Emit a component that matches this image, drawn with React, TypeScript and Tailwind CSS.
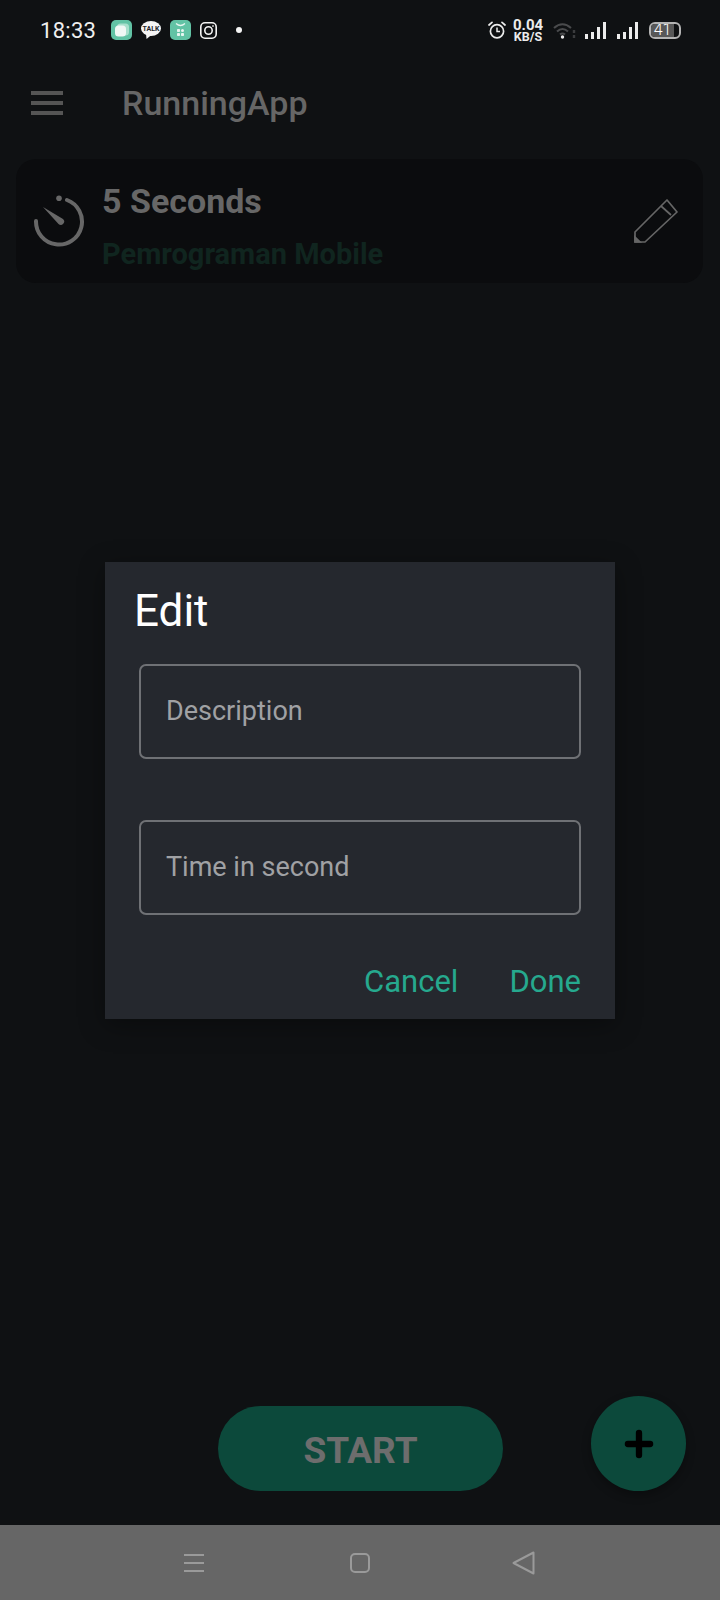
import { Plus } from "lucide-react";

function AppIcon() {
  return (
    <svg width="21" height="20" viewBox="0 0 21 20">
      <rect width="21" height="20" rx="5" fill="#62c3a5" />
      <rect x="6" y="3.5" width="12" height="12" rx="3.5" fill="#a9e0cd" />
      <rect x="4" y="5.5" width="11" height="11" rx="3.5" fill="#f1f8f5" />
    </svg>
  );
}

function TalkIcon() {
  return (
    <svg width="20" height="18" viewBox="0 0 20 18">
      <ellipse cx="10" cy="7.5" rx="10" ry="7.5" fill="#f4f4f4" />
      <path d="M5 12 L5.5 18 L11 13.5 Z" fill="#f4f4f4" />
      <text x="10" y="10" textAnchor="middle" fontSize="7" fontWeight="700" fill="#24262a" fontFamily="Roboto, sans-serif">TALK</text>
    </svg>
  );
}

function ShopIcon() {
  return (
    <svg width="21" height="20" viewBox="0 0 21 20">
      <rect width="21" height="20" rx="5" fill="#62c3a5" />
      <path d="M6 3.5 Q10.5 7.5 15 3.5" stroke="#e8f6f1" strokeWidth="1.2" fill="none" />
      <rect x="7" y="9" width="3" height="3" rx="0.7" fill="#e8f6f1" />
      <rect x="11" y="9" width="3" height="3" rx="1.5" fill="#e8f6f1" />
      <rect x="7" y="13" width="3" height="3" rx="0.7" fill="#e8f6f1" />
      <rect x="11" y="13" width="3" height="3" rx="0.7" fill="#e8f6f1" />
    </svg>
  );
}

function InstagramIcon() {
  return (
    <svg width="17" height="17" viewBox="0 0 17 17" fill="none" stroke="#f4f4f4" strokeWidth="1.6">
      <rect x="0.8" y="0.8" width="15.4" height="15.4" rx="4.2" />
      <circle cx="8.5" cy="8.5" r="3.7" />
      <circle cx="13" cy="4" r="0.6" fill="#f4f4f4" strokeWidth="0.6" />
    </svg>
  );
}

function AlarmIcon() {
  return (
    <svg width="18" height="18" viewBox="0 0 18 18" fill="none" stroke="#ececec" strokeWidth="1.7">
      <circle cx="9" cy="10.2" r="6.6" />
      <path d="M9 6.5 V10.5 H12" strokeWidth="1.5" />
      <path d="M1 4 L4 1.4 M17 4 L14 1.4" strokeLinecap="round" />
    </svg>
  );
}

function WifiIcon() {
  return (
    <svg width="23" height="17" viewBox="0 0 23 17" fill="none" stroke="#4a4b4d" strokeWidth="2.1">
      <path d="M1 6 Q9.5 -1.5 18 6" />
      <path d="M4 9.5 Q9.5 4.5 15 9.5" />
      <path d="M7 12.5 Q9.5 10.5 12 12.5" />
      <circle cx="9.5" cy="15" r="1.7" fill="#ececec" stroke="none" />
      <path d="M21 8 V11 M21 13 V16" stroke="#3b3c3e" strokeWidth="2.4" />
    </svg>
  );
}

function SignalIcon() {
  return (
    <div className="flex items-end gap-[3px] h-[17px] w-[22px]">
      <div className="w-[3px] h-[5px] bg-[#ececec]" />
      <div className="w-[3px] h-[7px] bg-[#ececec]" />
      <div className="w-[3px] h-[12px] bg-[#ececec]" />
      <div className="w-[3px] h-[17px] bg-[#ececec]" />
    </div>
  );
}

function Battery() {
  return (
    <div className="flex items-center w-[32px] h-[17px] rounded-[6px] border-2 border-[#b4b4b4] overflow-hidden">
      <div className="w-[23px] h-full bg-[#585858] flex items-center justify-center text-[16px] font-light leading-none text-white">41</div>
    </div>
  );
}

function TimerIcon() {
  return (
    <svg width="52" height="52" viewBox="0 0 52 52" fill="none">
      <path d="M34 5 A23 23 0 1 1 3 26" stroke="#676767" strokeWidth="4" strokeLinecap="round" />
      <circle cx="26" cy="3.2" r="2.8" fill="#676767" />
      <path d="M10 12 L30 24 A3.2 3.2 0 0 1 25.5 29 Z" fill="#676767" />
    </svg>
  );
}

function PencilIcon() {
  return (
    <svg width="44" height="44" viewBox="0 0 44 44" fill="none" stroke="#666" strokeWidth="1.7">
      <path d="M33 1 L43 13 L11 43 H1 V33 Z" strokeLinejoin="round" />
      <path d="M27 7 L37 16" />
      <path d="M1 38 L6 43 H1 Z" fill="#666" />
    </svg>
  );
}

function Field({ label }: { label: string }) {
  return (
    <div className="flex items-center h-[95px] px-[25px] rounded-[7px] border-2 border-[#6f7175] text-[27px] text-[#a0a1a4]">
      {label}
    </div>
  );
}

export default function App() {
  return (
    <div className="relative w-[720px] h-[1600px] flex flex-col overflow-hidden bg-[#0f1113] font-['Roboto',sans-serif]">
      <div className="flex items-center h-[60px] pl-[40px] pr-[39px] text-white">
        <span className="w-[71px] text-[22px] tracking-[0.3px] text-[#efefef]">18:33</span>
        <div className="flex items-center gap-[9px]">
          <AppIcon />
          <TalkIcon />
          <ShopIcon />
          <InstagramIcon />
          <div className="ml-[10px] w-[6px] h-[6px] rounded-full bg-[#f4f4f4]" />
        </div>
        <div className="ml-auto flex items-center">
          <AlarmIcon />
          <div className="ml-[7px] w-[30px] flex flex-col items-center font-bold text-[#ececec]">
            <span className="text-[15px] leading-[13px]">0.04</span>
            <span className="text-[12.5px] leading-[10px]">KB/S</span>
          </div>
          <div className="ml-[10px]"><WifiIcon /></div>
          <div className="ml-[9px]"><SignalIcon /></div>
          <div className="ml-[10px]"><SignalIcon /></div>
          <div className="ml-[10px]"><Battery /></div>
        </div>
      </div>

      <div className="flex items-center h-[86px] pl-[31px]">
        <div className="flex flex-col gap-[6px] w-[32px]">
          <div className="h-[4px] bg-[#555555]" />
          <div className="h-[4px] bg-[#555555]" />
          <div className="h-[4px] bg-[#555555]" />
        </div>
        <span className="ml-[59px] text-[34px] font-medium text-[#666666]">RunningApp</span>
      </div>

      <div className="mt-[13px] ml-[16px] mr-[17px] h-[124px] flex items-center pl-[17px] pr-[25px] rounded-[20px] bg-[#0b0c0e]">
        <TimerIcon />
        <div className="ml-[17px] self-start mt-[20px] flex flex-col">
          <span className="text-[34px] leading-[44px] font-bold text-[#676767]">5 Seconds</span>
          <span className="mt-[14px] text-[29px] leading-[34px] font-bold text-[#10251f]">Pemrograman Mobile</span>
        </div>
        <div className="ml-auto"><PencilIcon /></div>
      </div>

      <div className="mt-auto flex items-end pl-[218px] pb-[34px]">
        <div className="flex items-center justify-center w-[285px] h-[85px] pt-[4px] rounded-full bg-[#0c493b] text-[37px] font-bold text-[#6d6d6d]">
          START
        </div>
        <div className="ml-[88px] flex items-center justify-center w-[95px] h-[95px] rounded-full bg-[#0c493b] shadow-[0_4px_10px_rgba(0,0,0,0.3)]">
          <Plus size={38} strokeWidth={4} color="#000" />
        </div>
      </div>

      <div className="flex items-center h-[75px] bg-[#666666]">
        <div className="ml-[184px] flex flex-col gap-[6px] w-[20px]">
          <div className="h-[2px] bg-[#9a9a9a]" />
          <div className="h-[2px] bg-[#9a9a9a]" />
          <div className="h-[2px] bg-[#9a9a9a]" />
        </div>
        <div className="ml-[146px] w-[20px] h-[20px] rounded-[5px] border-2 border-[#9a9a9a]" />
        <svg className="ml-[142px]" width="23" height="24" viewBox="0 0 23 24" fill="none" stroke="#9a9a9a" strokeWidth="2" strokeLinejoin="round">
          <path d="M21.5 1.5 V22.5 L1.5 12 Z" />
        </svg>
      </div>

      <div className="absolute left-[105px] top-[562px] w-[510px] h-[457px] px-[34px] bg-[#25282e] shadow-[0_6px_24px_rgba(0,0,0,0.35)]">
        <div className="-ml-[5px] mt-[24px] text-[44px] leading-[50px] text-white">Edit</div>
        <div className="mt-[28px] flex flex-col gap-[61px]">
          <Field label="Description" />
          <Field label="Time in second" />
        </div>
        <div className="mt-[47px] flex justify-end gap-[51px] text-[31px] leading-[40px] text-[#26a98e]">
          <span>Cancel</span>
          <span>Done</span>
        </div>
      </div>
    </div>
  );
}
